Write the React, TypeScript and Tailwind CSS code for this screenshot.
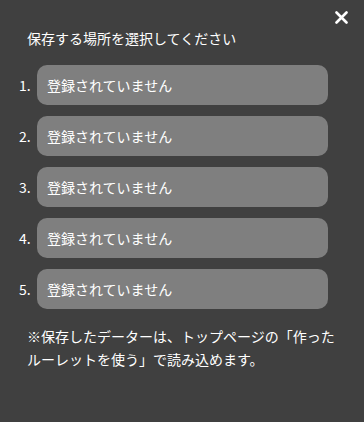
import React from "react";

export default function App() {
  const items = [1, 2, 3, 4, 5];
  return (
    <div
      className="relative w-[364px] h-[422px] bg-[#404040] text-white overflow-hidden"
      style={{ fontFamily: '"Noto Sans CJK JP", "Noto Sans", sans-serif' }}
    >
      <button className="absolute right-[15px] top-[9px] w-[16px] h-[16px] flex items-center justify-center">
        <svg width="13" height="13" viewBox="0 0 13 13">
          <path d="M1.5 1.5 L11.5 11.5 M11.5 1.5 L1.5 11.5" stroke="#fff" strokeWidth="2.6" strokeLinecap="round" />
        </svg>
      </button>
      <div className="pt-[28px] pl-[27px] text-[14px] leading-[20px]">保存する場所を選択してください</div>
      <div className="mt-[17px] flex flex-col gap-[11px]">
        {items.map((n) => (
          <div key={n} className="flex items-center pl-[19px]">
            <div className="w-[18px] text-[14px] leading-[20px]">{n}.</div>
            <div className="w-[291px] h-[40px] rounded-[10px] bg-[#7f7f7f] flex items-center pl-[10px] text-[14px]">
              登録されていません
            </div>
          </div>
        ))}
      </div>
      <div className="mt-[16px] px-[27px] text-[14px] leading-[23px]">
        ※保存したデーターは、トップページの「作った
        <br />
        ルーレットを使う」で読み込めます。
      </div>
    </div>
  );
}
